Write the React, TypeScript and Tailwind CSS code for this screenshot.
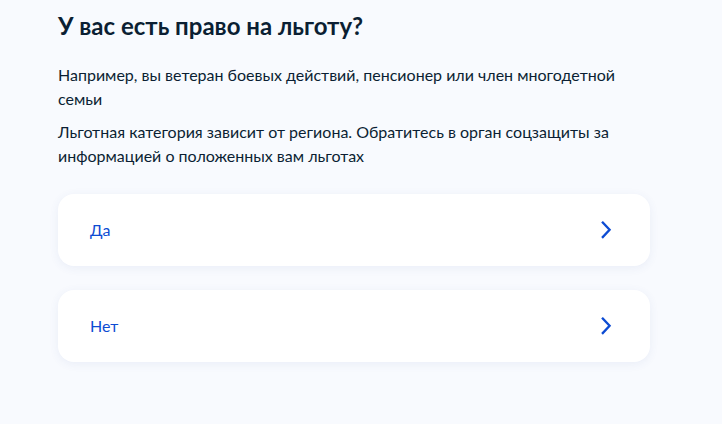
function ChevronRight() {
  return (
    <svg width="24" height="24" viewBox="0 0 24 24" fill="none" className="shrink-0">
      <path d="M8.8 4.6L15.6 11.8L8.8 19" stroke="#0d4cd3" strokeWidth="2.3" strokeLinecap="square" />
    </svg>
  );
}

function Option({ label }: { label: string }) {
  return (
    <button className="flex h-[72px] w-full items-center justify-between rounded-2xl bg-white pl-8 pr-8 text-left shadow-[0_2px_10px_rgba(60,90,160,0.08)]">
      <span className="text-[16px] leading-6 text-[#0d4cd3]">{label}</span>
      <ChevronRight />
    </button>
  );
}

export default function App() {
  return (
    <div className="min-h-[424px] bg-[#f8fafe] font-['Lato','Noto_Sans',sans-serif] text-[#0b1f33]">
      <div className="w-[592px] ml-[58px] pt-[10px]">
        <h1 className="text-[24px] font-bold leading-8">У вас есть право на льготу?</h1>
        <p className="mt-[21px] text-[16px] leading-6">
          Например, вы ветеран боевых действий, пенсионер или член многодетной семьи
        </p>
        <p className="mt-[9px] text-[16px] leading-6">
          Льготная категория зависит от региона. Обратитесь в орган соцзащиты за информацией о положенных вам льготах
        </p>
        <div className="mt-[26px] flex flex-col gap-6">
          <Option label="Да" />
          <Option label="Нет" />
        </div>
      </div>
    </div>
  );
}
